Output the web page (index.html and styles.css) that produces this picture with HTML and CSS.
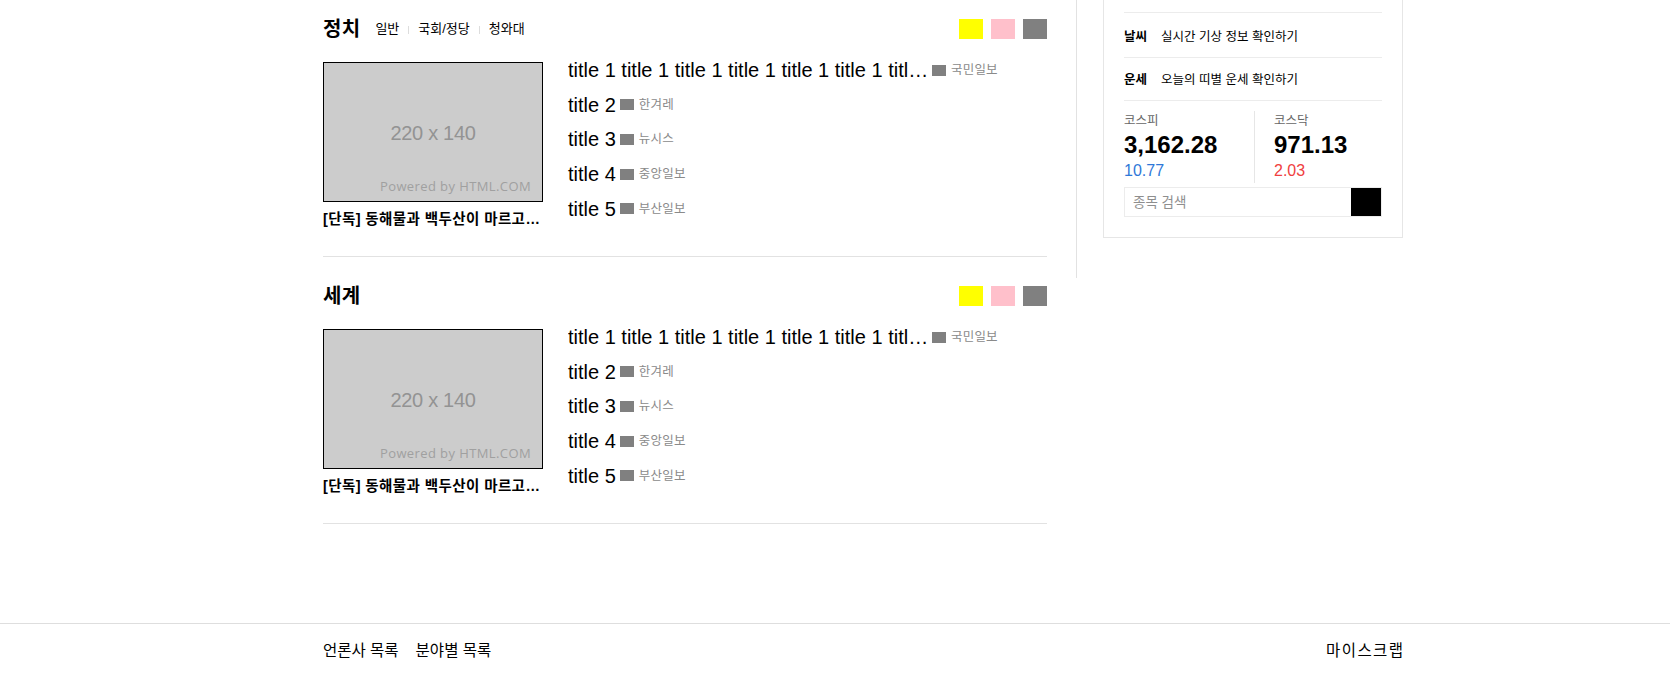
FILE: index.html
```html
<!DOCTYPE html>
<html lang="ko">
<head>
<meta charset="utf-8">
<title>뉴스</title>
<link rel="stylesheet" href="styles.css">
</head>
<body>
<div class="layout">
  <main class="main">
    <section class="news-section">
      <div class="sec-head">
        <div class="sec-title-group">
          <h2 class="sec-title">정치</h2>
          <ul class="sub-nav">
            <li>일반</li>
            <li>국회/정당</li>
            <li>청와대</li>
          </ul>
        </div>
        <div class="swatches">
          <span class="swatch swatch-yellow"></span>
          <span class="swatch swatch-pink"></span>
          <span class="swatch swatch-gray"></span>
        </div>
      </div>
      <div class="sec-body">
        <figure class="lead">
          <div class="thumb"><span class="thumb-size">220 x 140</span><span class="thumb-credit">Powered by HTML.COM</span></div>
          <figcaption class="lead-caption">[단독] 동해물과 백두산이 마르고 닳도록 하느님이 보우하사</figcaption>
        </figure>
        <ul class="headlines">
          <li class="headline"><span class="hl-title hl-title-long">title 1 title 1 title 1 title 1 title 1 title 1 title 1 title 1</span><span class="press press-long"><i class="press-logo"></i>국민일보</span></li>
          <li class="headline"><span class="hl-title">title 2</span><span class="press"><i class="press-logo"></i>한겨레</span></li>
          <li class="headline"><span class="hl-title">title 3</span><span class="press"><i class="press-logo"></i>뉴시스</span></li>
          <li class="headline"><span class="hl-title">title 4</span><span class="press"><i class="press-logo"></i>중앙일보</span></li>
          <li class="headline"><span class="hl-title">title 5</span><span class="press"><i class="press-logo"></i>부산일보</span></li>
        </ul>
      </div>
    </section>
    <section class="news-section">
      <div class="sec-head">
        <div class="sec-title-group">
          <h2 class="sec-title">세계</h2>
        </div>
        <div class="swatches">
          <span class="swatch swatch-yellow"></span>
          <span class="swatch swatch-pink"></span>
          <span class="swatch swatch-gray"></span>
        </div>
      </div>
      <div class="sec-body">
        <figure class="lead">
          <div class="thumb"><span class="thumb-size">220 x 140</span><span class="thumb-credit">Powered by HTML.COM</span></div>
          <figcaption class="lead-caption">[단독] 동해물과 백두산이 마르고 닳도록 하느님이 보우하사</figcaption>
        </figure>
        <ul class="headlines">
          <li class="headline"><span class="hl-title hl-title-long">title 1 title 1 title 1 title 1 title 1 title 1 title 1 title 1</span><span class="press press-long"><i class="press-logo"></i>국민일보</span></li>
          <li class="headline"><span class="hl-title">title 2</span><span class="press"><i class="press-logo"></i>한겨레</span></li>
          <li class="headline"><span class="hl-title">title 3</span><span class="press"><i class="press-logo"></i>뉴시스</span></li>
          <li class="headline"><span class="hl-title">title 4</span><span class="press"><i class="press-logo"></i>중앙일보</span></li>
          <li class="headline"><span class="hl-title">title 5</span><span class="press"><i class="press-logo"></i>부산일보</span></li>
        </ul>
      </div>
    </section>
  </main>
  <aside class="aside">
    <div class="info-box">
      <div class="info-row info-row-top"></div>
      <div class="info-row info-row-weather"><strong class="info-label">날씨</strong><span class="info-text">실시간 기상 정보 확인하기</span></div>
      <div class="info-row info-row-fortune"><strong class="info-label">운세</strong><span class="info-text">오늘의 띠별 운세 확인하기</span></div>
      <div class="stocks">
        <div class="stock stock-kospi">
          <div class="stock-name">코스피</div>
          <div class="stock-value">3,162.28</div>
          <div class="stock-change stock-down">10.77</div>
        </div>
        <div class="stock stock-kosdaq">
          <div class="stock-name">코스닥</div>
          <div class="stock-value">971.13</div>
          <div class="stock-change stock-up">2.03</div>
        </div>
      </div>
      <form class="search">
        <input class="search-input" type="text" placeholder="종목 검색">
        <button class="search-btn" type="button"></button>
      </form>
    </div>
  </aside>
</div>
<footer class="footer">
  <div class="footer-inner">
    <div class="footer-links"><span>언론사 목록</span><span>분야별 목록</span></div>
    <span class="footer-scrap">마이스크랩</span>
  </div>
</footer>
</body>
</html>
```
FILE: styles.css
```css
* { box-sizing: border-box; }
html, body { margin: 0; padding: 0; }
body {
  font-family: "Liberation Sans", "Noto Sans CJK KR", sans-serif;
  color: #000;
  background: #fff;
  overflow: hidden;
}
ul { list-style: none; margin: 0; padding: 0; }
h2, figure { margin: 0; }

.layout {
  display: flex;
  align-items: flex-start;
  width: 1080px;
  margin: -10px 0 0 323px;
}
.main { width: 724px; flex-shrink: 0; }

.news-section {
  height: 267px;
  padding-top: 20px;
  border-bottom: 1px solid #e2e2e2;
}
.sec-head {
  display: flex;
  justify-content: space-between;
  align-items: center;
  height: 38px;
}
.sec-title-group { display: flex; align-items: center; }
.sec-title { font-size: 20px; font-weight: bold; line-height: 38px; letter-spacing: 0.3px; }
.sub-nav { display: flex; align-items: center; margin-left: 15px; font-size: 13px; line-height: 20px; }
.sub-nav li { display: flex; align-items: center; }
.sub-nav li + li::before {
  content: "";
  display: inline-block;
  width: 1px;
  height: 8px;
  background: #ddd;
  margin: 1px 9px 0;
}
.swatches { display: flex; gap: 8px; }
.swatch { width: 24px; height: 20px; }
.swatch-yellow { background: #ffff00; }
.swatch-pink { background: #ffc0cb; }
.swatch-gray { background: #808080; }

.sec-body { display: flex; margin-top: 5px; }
.lead { width: 220px; padding-top: 9px; flex-shrink: 0; }
.thumb {
  position: relative;
  width: 220px;
  height: 140px;
  border: 1px solid #000;
  background: #cccccc;
  display: flex;
  align-items: center;
  justify-content: center;
}
.thumb-size { font-size: 20px; color: #939393; letter-spacing: -0.3px; margin-top: 2px; }
.thumb-credit {
  position: absolute;
  right: 11px;
  bottom: 7px;
  font-family: "Open Sans", sans-serif;
  font-size: 13px;
  line-height: 16px;
  letter-spacing: 0.4px;
  color: #a0a0a0;
}
.lead-caption {
  margin-top: 7px;
  width: 220px;
  font-size: 14.5px;
  font-weight: bold;
  line-height: 20px;
  letter-spacing: 0.4px;
  white-space: nowrap;
  overflow: hidden;
  text-overflow: ellipsis;
}

.headlines { margin-left: 25px; }
.headline { display: flex; align-items: center; height: 34.6px; }
.hl-title { font-size: 20px; line-height: 24px; white-space: nowrap; }
.hl-title-long { max-width: 362px; overflow: hidden; text-overflow: ellipsis; }
.press { display: flex; align-items: center; margin-left: 4px; font-size: 12.5px; line-height: 16px; letter-spacing: 0.2px; color: #8a8a8a; }
.press-long { margin-left: 2px; }
.press-logo { display: block; width: 14px; height: 11px; background: #808080; margin-right: 5px; }

.aside {
  width: 327px;
  flex-shrink: 0;
  margin-left: 29px;
  border-left: 1px solid #e2e2e2;
  padding: 0 0 40px 26px;
}
.info-box { border: 1px solid #e6e6e6; padding: 0 20px 20px; }
.info-row { display: flex; align-items: center; border-bottom: 1px solid #ececec; font-size: 12.5px; line-height: 18px; }
.info-row-top { height: 22px; }
.info-row-weather { height: 45px; padding-top: 3px; }
.info-row-fortune { height: 43px; padding-top: 2px; }
.info-label { font-weight: bold; width: 37px; }

.stocks { display: flex; padding-top: 10px; }
.stock-kospi { flex: 0 0 130px; }
.stock-kosdaq { flex: 1; border-left: 1px solid #e6e6e6; padding-left: 19px; }
.stock-name { font-size: 12.5px; line-height: 20px; color: #666; }
.stock-value { font-size: 24px; font-weight: bold; line-height: 28px; }
.stock-change { font-size: 16px; line-height: 24px; }
.stock-down { color: #2f78d8; }
.stock-up { color: #f04040; }

.search { display: flex; height: 30px; margin: 4px 0 0; border: 1px solid #ececec; }
.search-input {
  flex: 1;
  min-width: 0;
  border: none;
  outline: none;
  padding: 0 8px;
  font-family: "Liberation Sans", "Noto Sans CJK KR", sans-serif;
  font-size: 13.5px;
}
.search-input::placeholder { color: #8e8e8e; }
.search-btn { width: 30px; border: none; padding: 0; background: #000; }

.footer { margin-top: 99px; border-top: 1px solid #dedede; }
.footer-inner {
  display: flex;
  justify-content: space-between;
  width: 1080px;
  margin-left: 323px;
  padding-top: 17px;
  font-size: 15.5px;
  line-height: 20px;
}
.footer-links { display: flex; gap: 17px; }
.footer-scrap { letter-spacing: 1.4px; margin-right: -1.4px; }
```
